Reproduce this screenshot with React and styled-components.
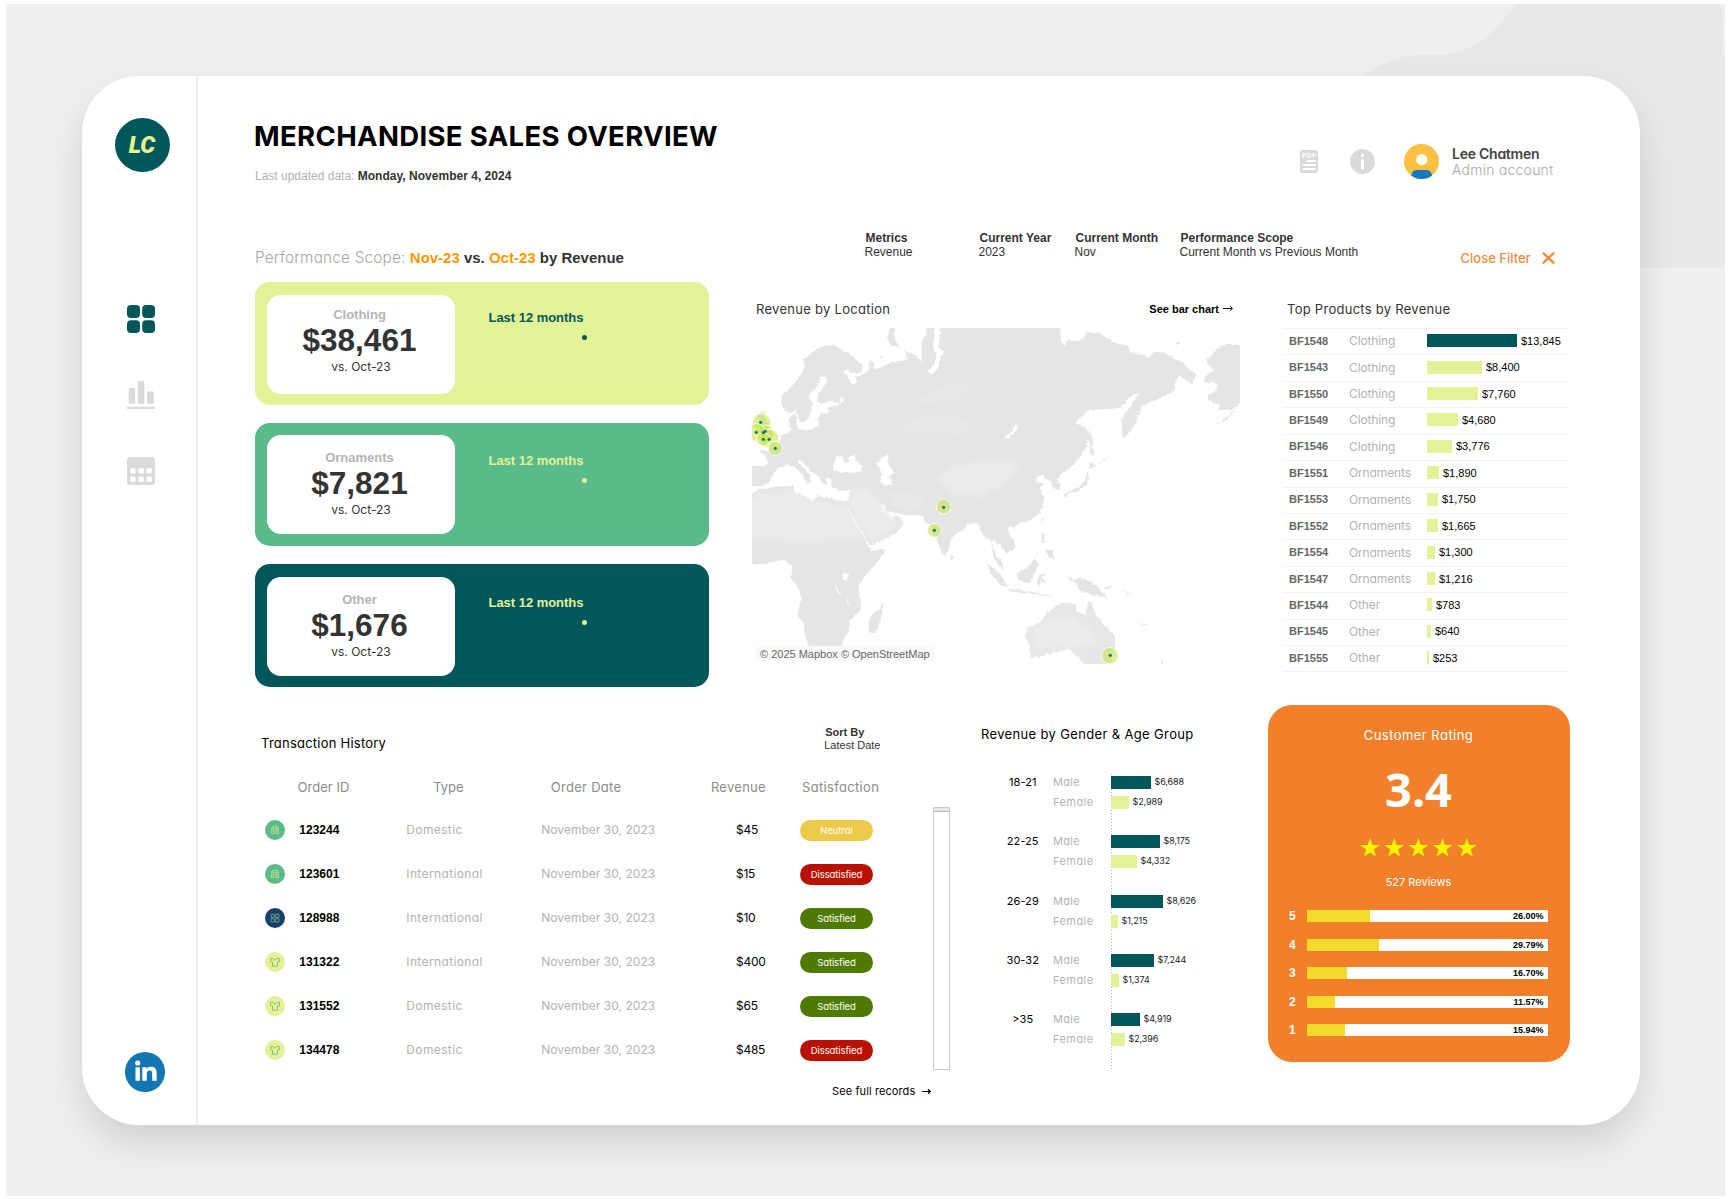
import React from "react";
import styled, { createGlobalStyle } from "styled-components";

const arial = `"Liberation Sans", Arial, sans-serif`;
const geo = `Inter, "Open Sans", sans-serif`;
const teal = "#02575b";
const lime = "#e2f297";

const GlobalStyle = createGlobalStyle`
  * { box-sizing: border-box; }
  body { margin: 0; background: #fff; font-family: ${arial}; color: #333; }
`;

/* ---------- text ---------- */

const Geo = styled.span`
  font-family: ${geo};
  font-feature-settings: "cv11";
  font-size: ${(p) => p.$size || 13}px;
  font-weight: ${(p) => p.$weight || 400};
  letter-spacing: ${(p) => p.$track || 0}px;
  color: ${(p) => p.$color || "#000"};
  white-space: pre;
`;

const Sans = styled.span`
  font-family: ${arial};
  font-size: ${(p) => p.$size || 12}px;
  font-weight: ${(p) => (p.$bold ? 700 : 400)};
  letter-spacing: ${(p) => p.$track || 0}px;
  color: ${(p) => p.$color || "#333"};
  white-space: pre;
`;

/* ---------- frame ---------- */

const Page = styled.div`
  width: 1730px;
  height: 1199px;
  padding: 4px 5px 3px 6px;
  overflow: hidden;
`;

const Stage = styled.div`
  position: relative;
  height: 1192px;
  padding: 71.5px 85.5px 71px 76px;
  background: #efefef;
  overflow: hidden;
`;

const Backdrop = styled.svg`
  position: absolute;
  top: 0;
  right: 0;
`;

const Card = styled.div`
  position: relative;
  display: flex;
  height: 1049.5px;
  border-radius: 57px;
  background: #fff;
  box-shadow: 0 18px 34px rgba(0, 0, 0, 0.125);
`;

const Sidebar = styled.nav`
  display: flex;
  flex-direction: column;
  align-items: center;
  width: 116px;
  padding: 42px 0 33px 3px;
  border-right: 2px solid #f0f0f0;
`;

const Logo = styled.div`
  display: grid;
  place-items: center;
  width: 55px;
  height: 54px;
  margin-right: -3px;
  border-radius: 50%;
  background: ${teal};
  color: #e6f58d;
  font: italic 900 23.5px Roboto, sans-serif;
`;

const NavList = styled.div`
  display: flex;
  flex-direction: column;
  gap: 48px;
  margin-top: 133px;
  flex: 1;
  svg { display: block; }
`;

const LinkedIn = styled.div`
  width: 40px;
  height: 40px;
  margin-left: 9px;
  svg { display: block; }
`;

const Main = styled.main`
  display: flex;
  flex-direction: column;
  padding-left: 57px;
`;

/* ---------- header ---------- */

const Header = styled.header`
  display: flex;
  justify-content: space-between;
  width: 1316px;
  height: 139.5px;
`;

const Heading = styled.div`
  display: flex;
  flex-direction: column;
  padding-top: 40px;
`;

const Title = styled.h1`
  margin: 0 0 10px -1px;
  font: 700 27.5px/40px ${geo};
  letter-spacing: 0.35px;
  color: #000;
`;

const UserArea = styled.div`
  display: flex;
  align-items: center;
  height: 50px;
  margin-top: 61px;
  padding-right: 17px;
`;

const IconSlot = styled.div`
  display: flex;
  margin-right: ${(p) => p.$gap}px;
`;

const UserText = styled.div`
  display: flex;
  flex-direction: column;
  width: 102px;
  line-height: 16px;
`;

/* ---------- scope row ---------- */

const ScopeRow = styled.div`
  display: flex;
  width: 1316px;
  height: 67px;
`;

const Scope = styled.div`
  width: 609.5px;
  padding-top: 33px;
  line-height: 20px;
`;

const Filters = styled.div`
  display: grid;
  grid-template-columns: 114px 96px 105px 281px;
  padding-top: 16px;
`;

const Filter = styled.div`
  display: flex;
  flex-direction: column;
  line-height: 14px;
  span:first-child { padding-left: 1px; }
`;

const CloseFilter = styled.div`
  display: flex;
  align-items: center;
  gap: 11.5px;
  height: 20px;
  margin-top: 33px;
`;

/* ---------- upper section ---------- */

const Upper = styled.section`
  display: grid;
  grid-template-columns: 454px 488px 288px;
  column-gap: 43px;
  height: 423px;
`;

const CategoryList = styled.div`
  display: flex;
  flex-direction: column;
  gap: 18px;
`;

const Category = styled.div`
  display: flex;
  height: 123px;
  padding: ${(p) => p.$inset}px 12px 0;
  border-radius: 15px;
  background: ${(p) => p.$bg};
`;

const CategoryValue = styled.div`
  display: flex;
  flex-direction: column;
  align-items: center;
  width: 188px;
  height: 98.5px;
  padding: ${(p) => p.$pad}px 3px 0 0;
  border-radius: 14px;
  background: #fff;
  span:nth-child(1) { line-height: 21px; }
  span:nth-child(2) { line-height: 30px; }
  span:nth-child(3) { line-height: 24px; padding-left: 3px; }
`;

const Trend = styled.div`
  display: flex;
  flex-direction: column;
  padding: ${(p) => p.$pad}px 0 0 33.5px;
  line-height: 14px;
`;

const TrendDot = styled.i`
  width: 5px;
  height: 5px;
  margin: 10px 0 0 93.5px;
  border-radius: 50%;
  background: ${(p) => p.$color};
`;

const PanelHead = styled.div`
  display: flex;
  justify-content: space-between;
  align-items: center;
  height: 18px;
  margin: 17.5px 7px 10.5px 4px;
`;

const MapFrame = styled.div`
  position: relative;
  width: 488px;
  height: 336px;
  overflow: hidden;
  svg { display: block; }
`;

const Attribution = styled.div`
  position: absolute;
  left: 4px;
  bottom: 3px;
  height: 15px;
  padding: 0 4px;
  background: #fafafa;
  line-height: 14px;
`;

const ArrowLink = styled.div`
  display: flex;
  align-items: center;
  gap: 4px;
`;

const ProductRow = styled.div`
  display: grid;
  grid-template-columns: 60px 78px 1fr;
  align-items: center;
  height: 26.43px;
  padding: 0 0 2px 6px;
  border-top: 1px solid #f3f3f3;
  &:last-child { height: 27.4px; border-bottom: 1px solid #f3f3f3; }
`;

const BarCell = styled.div`
  display: flex;
  align-items: center;
  gap: 4px;
`;

const Bar = styled.i`
  height: 13px;
  background: ${(p) => (p.$dark ? teal : lime)};
`;

/* ---------- lower section ---------- */

const Lower = styled.section`
  display: grid;
  grid-template-columns: 727px 286px 302px;
`;

const TableTop = styled.div`
  display: flex;
  justify-content: space-between;
  height: 68px;
  padding: 29px 101.5px 0 6px;
  line-height: 18px;
`;

const SortBy = styled.div`
  display: flex;
  flex-direction: column;
  margin-top: -8.5px;
  line-height: 13px;
  span:first-child { padding-left: 1px; }
`;

const TableHead = styled.div`
  display: grid;
  grid-template-columns: 135.7px 117.6px 160.1px 91.2px auto;
  align-items: center;
  height: 29px;
  padding: 0 0 2px 42.500px;
`;

const TableBody = styled.div`
  display: flex;
  height: 270px;
`;

const Rows = styled.div`
  width: 678px;
  padding-top: 6px;
`;

const Order = styled.div`
  display: grid;
  grid-template-columns: 34.3px 107px 135px 194.7px 64px 73px;
  align-items: center;
  height: 44px;
  padding-left: 10px;
  svg { display: block; }
  > span { padding-bottom: 1px; }
`;

const Pill = styled.div`
  display: grid;
  place-items: center;
  height: 21px;
  border-radius: 11px;
  background: ${(p) => p.$bg};
`;

const ScrollTrack = styled.div`
  width: 17px;
  height: 263px;
  margin-top: 5px;
  border: 1.5px solid #c9c9c9;
  border-radius: 1px;
`;

const ScrollThumb = styled.div`
  height: 3.5px;
  background: #e6e6e6;
  border-bottom: 1px solid #bdbdbd;
`;

const RecordsLink = styled.div`
  display: flex;
  align-items: center;
  gap: 7px;
  height: 38px;
  padding-left: 577px;
`;

const AgeTitle = styled.div`
  margin-left: -1px;
  padding-top: 18.5px;
  line-height: 19px;
`;

const AgeChart = styled.div`
  display: grid;
  grid-template-columns: 71px 57.5px 1fr;
  height: 296px;
  margin-top: 30.5px;
`;

const ChartColumn = styled.div`
  background: ${(p) => (p.$axis ? "repeating-linear-gradient(#b4b4b4 0 1px, transparent 1px 3px) 0 0 / 1px 100% no-repeat" : "none")};
`;

const ChartGroup = styled.div`
  display: flex;
  flex-direction: column;
  gap: 3px;
  height: 59.25px;
  padding-left: ${(p) => p.$indent || 0}px;
  text-align: ${(p) => (p.$centered ? "center" : "left")};
  line-height: 16px;
  span { height: 17px; }
`;

const ChartRow = styled.div`
  display: flex;
  align-items: center;
  gap: 4px;
  height: 17px;
`;

const Rating = styled.div`
  display: flex;
  flex-direction: column;
  align-items: center;
  height: 356.5px;
  padding: 22px 22px 0 21px;
  border-radius: 24px;
  background: #f2802a;
`;

const Score = styled.div`
  height: 60px;
  margin-top: 16px;
  font: 700 47px/60px "Noto Sans", "Open Sans", sans-serif;
  color: #fff;
`;

const Stars = styled.svg`
  display: block;
  margin: 19px 1px 17px 0;
`;

const ScoreRows = styled.div`
  align-self: stretch;
  display: flex;
  flex-direction: column;
  gap: 16.5px;
  margin-top: 20px;
`;

const ScoreRow = styled.div`
  display: grid;
  grid-template-columns: 18px 241px;
  align-items: center;
  height: 12px;
`;

const ScoreTrack = styled.div`
  display: flex;
  justify-content: space-between;
  align-items: center;
  height: 12px;
  padding-right: 4.5px;
  background: #fff;
`;

const ScoreFill = styled.i`
  height: 12px;
  background: #f4da2d;
`;

/* ---------- data ---------- */

const categories = [
  { name: "Clothing", value: "$38,461", bg: lime, ink: teal, inset: 13, pad: 8.5, trend: 15.5 },
  { name: "Ornaments", value: "$7,821", bg: "#5aba89", ink: lime, inset: 12, pad: 11.5, trend: 19 },
  { name: "Other", value: "$1,676", bg: teal, ink: lime, inset: 13, pad: 11.5, trend: 19 },
];

const filters = [
  ["Metrics", "Revenue"],
  ["Current Year", "2023"],
  ["Current Month", "Nov"],
  ["Performance Scope", "Current Month vs Previous Month"],
];

const products = [
  ["BF1548", "Clothing", 13845],
  ["BF1543", "Clothing", 8400],
  ["BF1550", "Clothing", 7760],
  ["BF1549", "Clothing", 4680],
  ["BF1546", "Clothing", 3776],
  ["BF1551", "Ornaments", 1890],
  ["BF1553", "Ornaments", 1750],
  ["BF1552", "Ornaments", 1665],
  ["BF1554", "Ornaments", 1300],
  ["BF1547", "Ornaments", 1216],
  ["BF1544", "Other", 783],
  ["BF1545", "Other", 640],
  ["BF1555", "Other", 253],
];

const orders = [
  ["ornament", "123244", "Domestic", "$45", "Neutral"],
  ["ornament", "123601", "International", "$15", "Dissatisfied"],
  ["other", "128988", "International", "$10", "Satisfied"],
  ["clothing", "131322", "International", "$400", "Satisfied"],
  ["clothing", "131552", "Domestic", "$65", "Satisfied"],
  ["clothing", "134478", "Domestic", "$485", "Dissatisfied"],
];

const pillColors = { Neutral: "#edca4a", Dissatisfied: "#b91000", Satisfied: "#4e7a00" };

const ages = [
  ["18-21", 6688, 2989],
  ["22-25", 8175, 4332],
  ["26-29", 8626, 1215],
  ["30-32", 7244, 1374],
  [">35", 4919, 2396],
];

const scores = [[5, 26], [4, 29.79], [3, 16.7], [2, 11.57], [1, 15.94]];

const money = (n) => "$" + n.toLocaleString("en-US");

/* ---------- icons ---------- */

const GridIcon = () => (
  <svg width="28" height="28" fill={teal}>
    <rect width="13" height="13" rx="4" /><rect x="15.2" width="12.8" height="13" rx="4" />
    <rect y="15.2" width="13" height="12.8" rx="4" /><rect x="15.2" y="15.2" width="12.8" height="12.8" rx="4" />
  </svg>
);

const BarsIcon = () => (
  <svg width="28" height="28" fill="#dadada">
    <path d="M1.7 7h6.4v15.7H1.7zM10.9 0h6.4v22.7h-6.4zM20 10.5h6.8v12.2H20zM0 25.7h28V28H0z" />
  </svg>
);

const CalendarIcon = () => (
  <svg width="28" height="28">
    <rect width="28" height="28" rx="3.5" fill="#dadada" />
    <g fill="#fff">
      {[3.2, 11.4, 19.6].map((x) => [11.3, 19.4].map((y) => (
        <rect key={`${x}-${y}`} x={x} y={y} width="5.3" height="5.3" rx="0.8" />
      )))}
    </g>
  </svg>
);

const LinkedInIcon = () => (
  <svg width="40" height="40">
    <circle cx="20" cy="20" r="20" fill="#1376b4" />
    <g fill="#fff">
      <circle cx="12.7" cy="11" r="2.6" />
      <path d="M10.5 15.2h4.4v13.5h-4.4zM17.3 15.2h4.2V17c.8-1.300 2.300-2.200 4.500-2.200 4.200 0 5.700 2.600 5.700 6.700v7.200h-4.500v-6.600c0-2.200-.5-3.600-2.500-3.600-2.100 0-2.900 1.500-2.900 3.600v6.600h-4.500z" />
    </g>
  </svg>
);

const PdfIcon = () => (
  <svg width="18" height="23">
    <rect width="18" height="23" rx="2.2" fill="#dadada" />
    <text x="9.2" y="7.9" textAnchor="middle" fontFamily="Liberation Sans" fontWeight="700" fontSize="6.8" letterSpacing="0.2" fill="#fff">PDF</text>
    <path d="M7.5 11h7.7M3.4 15h11.8M3.4 19h11.8" stroke="#fff" strokeWidth="1.8" strokeLinecap="round" />
  </svg>
);

const InfoIcon = () => (
  <svg width="25" height="25">
    <circle cx="12.5" cy="12.5" r="12.5" fill="#dadada" />
    <circle cx="12.5" cy="6.5" r="1.8" fill="#fff" />
    <path d="M12.5 11.3v8" stroke="#fff" strokeWidth="3" strokeLinecap="round" />
  </svg>
);

const Avatar = () => (
  <svg width="35" height="35">
    <circle cx="17.5" cy="17.5" r="17.5" fill="#ffc042" />
    <circle cx="17.7" cy="15.6" r="5.6" fill="#fff" />
    <path d="M7.200 31.500C7.800 28 9.500 26 13 26h9c3.500 0 5.500 2 6.200 5.500C25 34 21.500 35 17.700 35s-7.500-1-10.500-3.500z" fill="#1679c2" />
  </svg>
);

const CloseIcon = () => (
  <svg width="13" height="12">
    <path d="M1.6 1.3l9.8 9.4M11.4 1.3L1.6 10.700" stroke="#f58b3d" strokeWidth="2.3" strokeLinecap="round" />
  </svg>
);

const Arrow = ({ width = 10, weight = 0.9 }) => (
  <svg width={width} height="7" fill="none" stroke="#000" strokeWidth={weight}>
    <path d={`M0 3.5H${width - 0.6}M${width - 3} 1.3L${width - 0.6} 3.5L${width - 3} 5.7`} />
  </svg>
);

const orderGlyphs = {
  ornament: {
    bg: "#5aba89",
    stroke: "#a5d98d",
    d: "M6.6 11.500V8.500Q6.600 5.800 10 5.800T13.400 8.500V11.500M6.600 8.300h6.800M6.600 10.800h6.800M8.600 6.200v5M11.400 6.200v5M6.600 11.200l-.4 2.600 1.800.3.600-2.300 1.400 2 1.400-2 .6 2.300 1.800-.3-.4-2.600",
  },
  other: {
    bg: "#14406a",
    stroke: "#6d937f",
    d: "M6.200 6.300h3.200v3.200H6.200zM10.700 6.300h3.200v3.200h-3.200zM6.200 10.800h3.200V14H6.200zM10.700 10.800h3.200V14h-3.200z",
  },
  clothing: {
    bg: lime,
    stroke: "#93bd80",
    d: "M8 6.400H5.500v3.400h2V14.200h5v-4.400h2V6.400H12q-.5 1.500-2 1.500T8 6.400z",
  },
};

const OrderIcon = ({ kind }) => {
  const g = orderGlyphs[kind];
  return (
    <svg width="20" height="20">
      <circle cx="10" cy="10" r="10" fill={g.bg} />
      <path d={g.d} fill="none" stroke={g.stroke} strokeWidth="1" />
    </svg>
  );
};

/* ---------- map ---------- */

const land = [
  "M20 797L78 799L82 788L80 770L62 757L60 751L84 751L88 740L100 735L118 722L126 706L140 700L158 693L150 680L147 660L165 640L172 650L170 672L178 688L200 690L222 688L236 676L234 655L242 640L268 638L262 624L285 616L300 610L270 606L240 610L230 600L236 578L250 560L262 545L258 530L240 530L232 560L210 578L206 595L216 610L214 630L205 650L192 668L180 668L176 650L168 632L150 640L134 632L126 615L125 585L165 550L185 520L197 490L190 478L212 462L240 442L275 434L292 438L298 446L325 458L350 480L368 497L366 515L345 522L325 510L310 512L325 535L338 556L352 545L345 528L372 522L388 507L385 488L392 480L402 490L400 505L412 508L440 492L470 484L500 480L500 462L490 450L520 462L545 487L545 430L560 400L560 370L960 370L962 415L975 438L985 420L1010 425L1035 412L1040 396L1075 400L1100 415L1130 430L1165 437L1170 460L1205 462L1225 474L1245 456L1275 458L1300 475L1330 488L1345 508L1370 522L1355 550L1338 540L1318 528L1305 550L1300 575L1262 595L1222 610L1205 625L1195 650L1185 675L1165 700L1150 720L1143 690L1145 660L1160 635L1180 605L1200 578L1170 590L1140 625L1100 628L1045 630L1005 670L1035 680L1045 700L1040 735L1020 775L990 803L965 818L950 835L962 855L955 872L942 865L932 845L918 835L912 822L890 835L888 847L912 850L900 865L912 890L908 920L895 945L870 962L840 968L825 985L810 978L800 987L808 1005L825 1025L826 1045L800 1062L790 1045L770 1030L758 1015L757 1038L767 1065L785 1085L790 1110L775 1098L760 1068L752 1020L730 1008L722 985L710 968L680 975L675 985L650 1000L632 1018L628 1050L613 1067L600 1045L587 1010L570 975L555 965L545 945L500 945L472 940L445 935L430 915L415 912L425 930L434 948L455 958L470 944L492 968L470 1000L430 1020L388 1037L380 1020L360 985L335 940L322 925L340 965L370 1010L385 1042L400 1052L435 1045L430 1065L400 1100L370 1135L355 1160L362 1200L362 1230L330 1262L325 1295L305 1330L298 1345L210 1345L195 1310L190 1270L172 1245L185 1195L175 1160L152 1135L158 1100L130 1080L70 1092L20 1092L20 890L55 870L100 862L160 858L165 880L200 892L215 905L235 888L270 895L300 905L328 900L335 870L300 872L277 862L270 835L258 832L264 850L248 852L235 828L215 818L200 800L185 783L173 784L185 802L212 825L210 842L198 852L190 825L165 800L148 795L115 803L100 825L85 850L60 858L20 858z",
  "M428 1210L430 1225L412 1290L400 1300L386 1296L385 1275L392 1245L412 1232z",
  "M52 642L75 632L74 650L92 690L98 716L56 728L66 700z",
  "M632 1062L641 1072L638 1082L631 1078z",
  "M1046 785L1068 798L1050 806z",
  "M1040 815L1048 835L1040 855L1016 872L990 880L974 892L970 885L990 872L1016 862L1034 840z",
  "M1048 688L1056 715L1062 765L1054 768L1050 730L1042 715z",
  "M905 952L912 956L906 970zM903 998L914 1005L912 1024L925 1034L905 1022zM915 1052L938 1046L942 1078L928 1072zM898 1050L880 1078L894 1060z",
  "M830 1122L860 1105L885 1078L897 1090L884 1118L868 1150L836 1140z",
  "M735 1088L760 1103L790 1135L803 1162L786 1158L760 1128z",
  "M805 1166L850 1172L892 1178L940 1190L890 1184L808 1174z",
  "M898 1124L928 1120L906 1130L922 1150L902 1142L898 1162L892 1142z",
  "M975 1130L1000 1138L1030 1135L1070 1155L1085 1175L1105 1193L1080 1187L1050 1185L1020 1172L1010 1150zM1090 1165L1122 1152L1104 1168z",
  "M1145 1165L1182 1192L1160 1180zM1196 1264L1222 1275L1206 1274zM1262 1378L1272 1392L1264 1388z",
  "M1520 440L1465 430L1430 445L1418 465L1398 480L1410 500L1425 508L1395 530L1392 545L1430 550L1432 570L1402 585L1405 600L1440 615L1435 630L1475 630L1520 590z",
  "M1500 612L1460 660L1425 676L1462 650zM1300 430L1318 424L1320 432zM415 470L430 466L424 474zM1070 792L1108 770L1086 788z",
  "M470 370L450 384L440 410L450 435L478 440L466 420L462 400z",
];

const australia = "M860 1285L905 1265L920 1240L945 1222L965 1208L1005 1208L1010 1235L1035 1245L1050 1200L1060 1225L1075 1255L1110 1290L1125 1310L1125 1340L1108 1400L1035 1400L1015 1370L985 1348L940 1355L910 1368L872 1375L870 1345L858 1310z";

const water = [
  "M278 812L280 795L290 770L305 768L313 788L330 784L322 774L345 763L346 780L368 800L365 816L330 820L300 815z",
  "M410 790L430 768L450 765L440 785L450 800L462 820L448 830L455 855L430 858L420 840L425 820z",
  "M582 370L582 440L590 470L582 495L562 515L575 522L592 508L602 470L614 455L596 445L600 400L602 370z",
  "M308 1122L328 1120L318 1142L308 1140zM286 1146L302 1190L290 1172zM320 1185L328 1222L322 1210z",
  "M302 590L312 604L298 612z",
  "M828 672L832 685L805 716L788 714L808 706z",
];

const desert = [
  "M0 925L60 880L160 872L200 900L320 915L370 1020L300 1015L200 1028L90 1018L0 1012z",
  "M335 870L380 860L440 940L480 970L430 1012L392 1024L350 960L328 915z",
  "M590 835L640 800L720 780L840 785L800 850L720 890L640 880z",
  "M880 1285L930 1255L1000 1250L1050 1290L1080 1330L1010 1345L950 1340L890 1350z",
];

const steppe = [
  "M480 700L520 655L640 650L720 690L660 705L560 690z",
  "M560 610L660 590L700 560L640 545L590 570L520 600z",
  "M440 880L520 870L560 910L520 935L470 925z",
];

const markers = [
  [65, 668, 27], [77, 700, 25], [50, 697, 27], [88, 716, 28], [70, 718, 20], [106, 745, 21],
  [611, 920, 22], [583, 991, 21], [1110, 1367, 25],
];

const points = [
  [62, 667], [49, 697], [70, 698], [76, 694], [70, 718], [88, 718], [106, 745], [611, 922], [583, 991], [1111, 1366],
];

const WorldMap = () => (
  <svg width="488" height="336" viewBox="36 384 1464 1008">
    <defs>
      <filter id="coast" x="-5%" y="-5%" width="110%" height="110%">
        <feTurbulence type="fractalNoise" baseFrequency="0.08" numOctaves="3" seed="4" />
        <feDisplacementMap in="SourceGraphic" scale="11" xChannelSelector="R" yChannelSelector="G" />
      </filter>
      <filter id="soft"><feGaussianBlur stdDeviation="7" /></filter>
    </defs>
    <g filter="url(#coast)">
      <g fill="#e5e5e5">{land.map((d) => <path key={d} d={d} />)}</g>
      <path d={australia} fill="#e7e7e7" />
      <g fill="#ececec" filter="url(#soft)">{desert.map((d) => <path key={d} d={d} />)}</g>
      <g fill="#e8e8e8" filter="url(#soft)">{steppe.map((d) => <path key={d} d={d} />)}</g>
      <g fill="#fff">{water.map((d) => <path key={d} d={d} />)}</g>
    </g>
    <g fill="#c6e34f" fillOpacity="0.58" stroke="#fff" strokeWidth="2.5">
      {markers.map(([x, y, r]) => <circle key={`${x}-${y}`} cx={x} cy={y} r={r} />)}
    </g>
    <g fill="#1f7a63">
      {points.map(([x, y]) => <circle key={`${x}-${y}`} cx={x} cy={y} r="4.8" />)}
    </g>
  </svg>
);

/* ---------- page ---------- */

const starPath = "M10 0l2.350 7.100h7.600l-6.100 4.500 2.300 7.200L10 14.400l-6.150 4.400 2.300-7.200L.05 7.100h7.600z";

export default function App() {
  return (
    <Page>
      <GlobalStyle />
      <Stage>
        <Backdrop width="370" height="264">
          <path d="M160 0C142 30 112 51 84 51H67C40 51 20 63 0 78V264H370V0z" fill="#e8e8e8" />
          <path d="M365 0Q371 26 366 52H370V0z" fill="#efefef" />
        </Backdrop>
        <Card>
          <Sidebar>
            <Logo>LC</Logo>
            <NavList>
              <GridIcon />
              <BarsIcon />
              <CalendarIcon />
            </NavList>
            <LinkedIn><LinkedInIcon /></LinkedIn>
          </Sidebar>
          <Main>
            <Header>
              <Heading>
                <Title>MERCHANDISE SALES OVERVIEW</Title>
                <div>
                  <Sans $color="#b3b3b3" $size={12}>Last updated data: </Sans>
                  <Sans $bold $size={12} $track={0.02}>Monday, November 4, 2024</Sans>
                </div>
              </Heading>
              <UserArea>
                <IconSlot $gap={32}><PdfIcon /></IconSlot>
                <IconSlot $gap={29}><InfoIcon /></IconSlot>
                <IconSlot $gap={13.5}><Avatar /></IconSlot>
                <UserText>
                  <Geo $size={14} $weight={600} $track={-0.25} $color="#444">Lee Chatmen</Geo>
                  <Geo $size={14} $weight={300} $track={0.23} $color="#a9a9a9">Admin account</Geo>
                </UserText>
              </UserArea>
            </Header>

            <ScopeRow>
              <Scope>
                <Geo $size={15.3} $weight={300} $track={0.22} $color="#a6a6a6">Performance Scope:</Geo>
                <Sans $bold $size={15} $track={-0.02} $color="#ff9800"> Nov-23</Sans>
                <Sans $bold $size={15}> vs. </Sans>
                <Sans $bold $size={15} $color="#ff9800">Oct-23</Sans>
                <Sans $bold $size={15}> by Revenue</Sans>
              </Scope>
              <Filters>
                {filters.map(([label, value]) => (
                  <Filter key={label}>
                    <Sans $bold>{label}</Sans>
                    <Sans>{value}</Sans>
                  </Filter>
                ))}
              </Filters>
              <CloseFilter>
                <Geo $weight={500} $color="#f58b3d">Close Filter</Geo>
                <CloseIcon />
              </CloseFilter>
            </ScopeRow>

            <Upper>
              <CategoryList>
                {categories.map((c) => (
                  <Category key={c.name} $bg={c.bg} $inset={c.inset}>
                    <CategoryValue $pad={c.pad}>
                      <Sans $bold $size={13} $color="#b5b5b5">{c.name}</Sans>
                      <Sans $bold $size={31.5}>{c.value}</Sans>
                      <Geo $size={12} $color="#333">vs. Oct-23</Geo>
                    </CategoryValue>
                    <Trend $pad={c.trend}>
                      <Sans $bold $size={13} $track={-0.03} $color={c.ink}>Last 12 months</Sans>
                      <TrendDot $color={c.ink} />
                    </Trend>
                  </Category>
                ))}
              </CategoryList>

              <div>
                <PanelHead>
                  <Geo $track={0.29} $color="#333">Revenue by Location</Geo>
                  <ArrowLink>
                    <Sans $bold $size={11} $color="#000">See bar chart</Sans>
                    <Arrow />
                  </ArrowLink>
                </PanelHead>
                <MapFrame>
                  <WorldMap />
                  <Attribution><Sans $size={11} $color="#666">© 2025 Mapbox © OpenStreetMap</Sans></Attribution>
                </MapFrame>
              </div>

              <div>
                <PanelHead>
                  <Geo $track={0.27} $color="#333">Top Products by Revenue</Geo>
                </PanelHead>
                {products.map(([code, type, value], i) => (
                  <ProductRow key={code}>
                    <Sans $bold $size={11} $color="#666">{code}</Sans>
                    <Geo $size={12} $track={-0.13} $color="#b3b3b3">{type}</Geo>
                    <BarCell>
                      <Bar $dark={i === 0} style={{ width: Math.round((value / 13845) * 90.4) }} />
                      <Sans $size={11} $color="#000">{money(value)}</Sans>
                    </BarCell>
                  </ProductRow>
                ))}
              </div>
            </Upper>

            <Lower>
              <div>
                <TableTop>
                  <Geo $track={0.23}>Transaction History</Geo>
                  <SortBy>
                    <Sans $bold $size={11}>Sort By</Sans>
                    <Sans $size={11}>Latest Date</Sans>
                  </SortBy>
                </TableTop>
                <TableHead>
                  <Geo $track={0.05} $color="#8c8c8c">Order ID</Geo>
                  <Geo $color="#8c8c8c">Type</Geo>
                  <Geo $track={0.28} $color="#8c8c8c">Order Date</Geo>
                  <Geo $track={0.28} $color="#8c8c8c">Revenue</Geo>
                  <Geo $track={0.32} $color="#8c8c8c">Satisfaction</Geo>
                </TableHead>
                <TableBody>
                  <Rows>
                    {orders.map(([kind, id, type, revenue, mood]) => (
                      <Order key={id}>
                        <OrderIcon kind={kind} />
                        <Sans $bold $color="#000">{id}</Sans>
                        <Geo $size={12} $track={0.37} $color="#b3b3b3">{type}</Geo>
                        <Geo $size={12} $track={0.03} $color="#b3b3b3">November 30, 2023</Geo>
                        <Geo $size={12} $track={-0.25}>{revenue}</Geo>
                        <Pill $bg={pillColors[mood]}>
                          <Geo $size={9.5} $track={-0.1} $color="#fff">{mood}</Geo>
                        </Pill>
                      </Order>
                    ))}
                  </Rows>
                  <ScrollTrack><ScrollThumb /></ScrollTrack>
                </TableBody>
                <RecordsLink>
                  <Geo $size={11} $track={0.1}>See full records</Geo>
                  <Arrow width={9} weight={1.2} />
                </RecordsLink>
              </div>

              <div>
                <AgeTitle><Geo $track={0.35}>Revenue by Gender & Age Group</Geo></AgeTitle>
                <AgeChart>
                  <ChartColumn>
                    {ages.map(([age]) => (
                      <ChartGroup key={age} $centered $indent={10.5}>
                        <Geo $size={11} $track={0.05}>{age}</Geo>
                      </ChartGroup>
                    ))}
                  </ChartColumn>
                  <ChartColumn>
                    {ages.map(([age]) => (
                      <ChartGroup key={age}>
                        <Geo $size={11} $track={0.3} $color="#b3b3b3">Male</Geo>
                        <Geo $size={11} $track={0.43} $color="#b3b3b3">Female</Geo>
                      </ChartGroup>
                    ))}
                  </ChartColumn>
                  <ChartColumn $axis>
                    {ages.map(([age, ...values]) => (
                      <ChartGroup key={age}>
                        {values.map((v, i) => (
                          <ChartRow key={i}>
                            <Bar $dark={i === 0} style={{ width: Math.round(v / 167) }} />
                            <Geo $size={9} $track={-0.1} $color="#222">{money(v)}</Geo>
                          </ChartRow>
                        ))}
                      </ChartGroup>
                    ))}
                  </ChartColumn>
                </AgeChart>
              </div>

              <Rating>
                <Geo $track={0.46} $color="#fff">Customer Rating</Geo>
                <Score>3.4</Score>
                <Stars width="117" height="20" fill="#f4f400">
                  {[0, 1, 2, 3, 4].map((i) => <path key={i} d={starPath} transform={`translate(${i * 24.2} 0)`} />)}
                </Stars>
                <Geo $size={11} $color="#fff">527 Reviews</Geo>
                <ScoreRows>
                  {scores.map(([n, pct]) => (
                    <ScoreRow key={n}>
                      <Sans $bold $size={12} $color="#fff">{n}</Sans>
                      <ScoreTrack>
                        <ScoreFill style={{ width: (pct / 100) * 241 }} />
                        <Sans $bold $size={9} $color="#000">{pct.toFixed(2)}%</Sans>
                      </ScoreTrack>
                    </ScoreRow>
                  ))}
                </ScoreRows>
              </Rating>
            </Lower>
          </Main>
        </Card>
      </Stage>
    </Page>
  );
}
